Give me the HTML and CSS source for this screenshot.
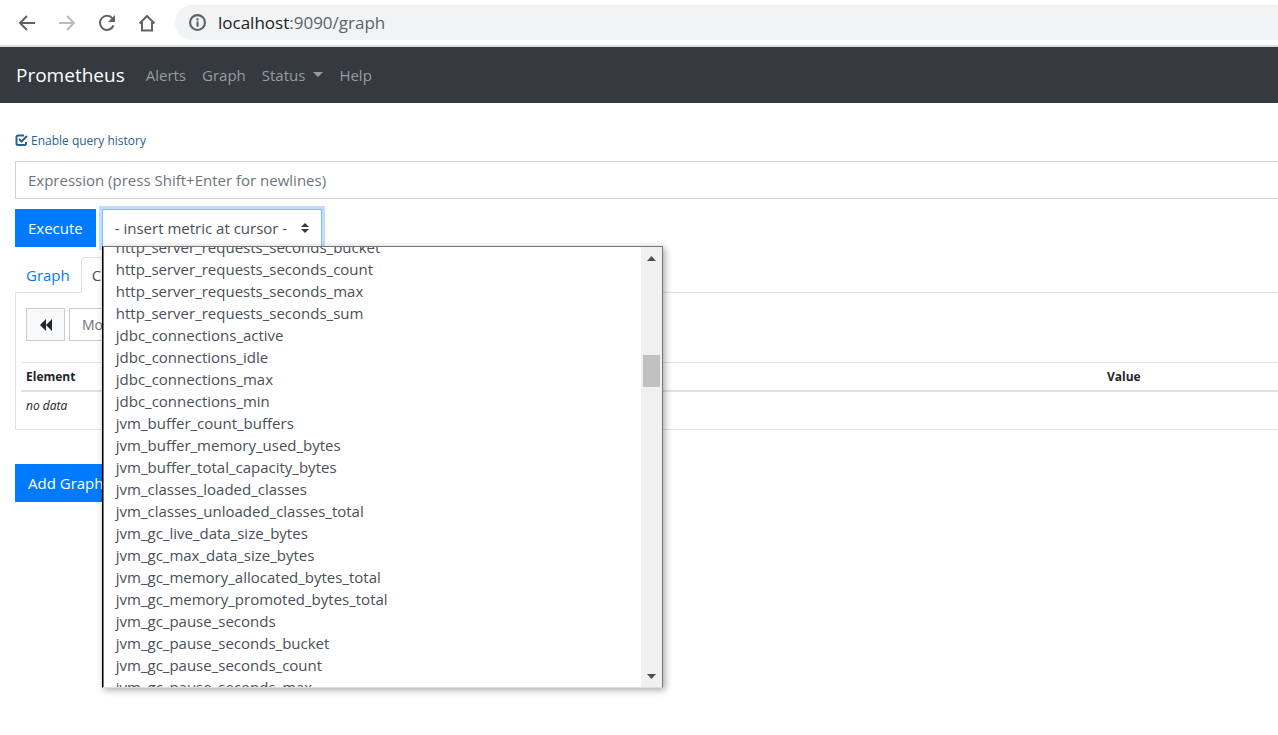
FILE: index.html
```
<!DOCTYPE html>
<html lang="en">
<head>
<meta charset="utf-8">
<title>Prometheus Time Series Collection and Processing Server</title>
<link rel="stylesheet" href="styles.css">
</head>
<body>
<header class="toolbar">
  <button class="tool" aria-label="Back"><svg viewBox="0 0 18 18"><path d="M17 9H2M9 2 2 9l7 7"/></svg></button>
  <button class="tool tool-off" aria-label="Forward" disabled><svg viewBox="0 0 18 18"><path d="M1 9h15M9 2l7 7-7 7"/></svg></button>
  <button class="tool" aria-label="Reload"><svg viewBox="0 0 18 18"><path d="M15.500 11.500A7 7 0 1 1 14.500 4.500"/><path class="solid" d="M17 1v7h-7z"/></svg></button>
  <button class="tool" aria-label="Home"><svg viewBox="0 0 18 18"><path d="M1.500 9.500 9 2l7.500 7.500M4 8v8.500h10V8"/></svg></button>
  <div class="address">
    <svg class="info" viewBox="0 0 16 16"><circle cx="8" cy="8" r="7"/><path d="M8 7v5M8 4v2"/></svg>
    <span class="url"><span class="host">localhost</span>:9090/graph</span>
  </div>
</header>
<nav class="navbar">
  <a class="brand" href="#">Prometheus</a>
  <a class="nav-link" href="#">Alerts</a>
  <a class="nav-link" href="#">Graph</a>
  <a class="nav-link caret" href="#">Status</a>
  <a class="nav-link" href="#">Help</a>
</nav>
<main class="page">
  <label class="history">
    <input class="history-input" type="checkbox" checked>
    <svg class="history-icon" viewBox="0 0 13 13"><path class="box" d="M9 1.500H3A1.500 1.500 0 0 0 1.500 3v6.500A1.500 1.500 0 0 0 3 11h6.500A1.500 1.500 0 0 0 11 9.500V8"/><path class="tick" d="M4 5l2.500 2.500L12 2"/></svg>
    <span>Enable query history</span>
  </label>
  <input class="expression" type="text" aria-label="Expression" placeholder="Expression (press Shift+Enter for newlines)">
  <div class="actions">
    <button class="primary">Execute</button>
    <div class="metric">
      <select class="metric-select" aria-label="Metric"><option>- insert metric at cursor -</option></select>
      <svg class="metric-arrows" viewBox="0 0 8 10"><path d="M0 4l4-4 4 4zM0 6h8l-4 4z"/></svg>
      <div class="popup">
        <ul class="options">
          <li>http_server_requests_seconds_bucket</li>
          <li>http_server_requests_seconds_count</li>
          <li>http_server_requests_seconds_max</li>
          <li>http_server_requests_seconds_sum</li>
          <li>jdbc_connections_active</li>
          <li>jdbc_connections_idle</li>
          <li>jdbc_connections_max</li>
          <li>jdbc_connections_min</li>
          <li>jvm_buffer_count_buffers</li>
          <li>jvm_buffer_memory_used_bytes</li>
          <li>jvm_buffer_total_capacity_bytes</li>
          <li>jvm_classes_loaded_classes</li>
          <li>jvm_classes_unloaded_classes_total</li>
          <li>jvm_gc_live_data_size_bytes</li>
          <li>jvm_gc_max_data_size_bytes</li>
          <li>jvm_gc_memory_allocated_bytes_total</li>
          <li>jvm_gc_memory_promoted_bytes_total</li>
          <li>jvm_gc_pause_seconds</li>
          <li>jvm_gc_pause_seconds_bucket</li>
          <li>jvm_gc_pause_seconds_count</li>
          <li>jvm_gc_pause_seconds_max</li>
        </ul>
        <div class="scrollbar">
          <svg class="scroll-arrow" viewBox="0 0 9 5"><path d="M0 5l4.500-5L9 5z"/></svg>
          <div class="thumb"></div>
          <svg class="scroll-arrow" viewBox="0 0 9 5"><path d="M0 0l4.500 5L9 0z"/></svg>
        </div>
      </div>
    </div>
  </div>
  <div class="tabs">
    <a class="tab" href="#">Graph</a>
    <a class="tab tab-active" href="#">Console</a>
  </div>
  <section class="panel">
    <div class="moment">
      <button class="rewind" aria-label="Earlier"><svg viewBox="0 0 12 12"><path d="M6 0v12L0 6zM12 0v12L6 6z"/></svg></button>
      <input class="moment-input" type="text" aria-label="Moment" placeholder="Moment">
    </div>
    <table class="results">
      <thead><tr><th class="element">Element</th><th>Value</th></tr></thead>
      <tbody><tr><td colspan="2"><i>no data</i></td></tr></tbody>
    </table>
  </section>
  <button class="primary">Add Graph</button>
</main>
</body>
</html>
```
FILE: styles.css
```
* { box-sizing: border-box; }
body {
  margin: 0;
  min-height: 100vh;
  background: #fff;
  color: #212529;
  font: 15px/24px "Open Sans", "Noto Sans", sans-serif;
}
button, input, select { font: inherit; border-radius: 0; margin: 0; }
a { text-decoration: none; }

.toolbar {
  display: flex;
  align-items: center;
  height: 47px;
  padding-left: 18px;
  border-bottom: 2px solid #dadce0;
}
.tool {
  width: 18px;
  height: 18px;
  margin-right: 22px;
  padding: 0;
  border: 0;
  background: none;
  color: #5f6368;
}
.tool-off { color: #babcbe; }
.tool svg { display: block; width: 18px; height: 18px; fill: none; stroke: currentColor; stroke-width: 2; }
.tool .solid { fill: currentColor; stroke: none; }
.address {
  display: flex;
  flex: 1;
  align-items: center;
  gap: 12px;
  height: 35px;
  margin-left: -3px;
  padding-left: 14px;
  border-radius: 18px 0 0 18px;
  background: #f1f3f4;
}
.info { width: 17px; height: 17px; fill: none; stroke: #5f6368; stroke-width: 2; }
.url { color: #5f6368; font-size: 17px; }
.host { color: #202124; }

.navbar {
  display: flex;
  align-items: center;
  gap: 16px;
  height: 56px;
  padding: 0 16px;
  background: #343a40;
}
.brand { margin-right: 5px; color: #fff; font-size: 19px; }
.nav-link { color: #999c9f; }
.caret::after {
  content: "";
  display: inline-block;
  margin-left: 8px;
  border: 5px solid transparent;
  border-top-color: currentColor;
  border-bottom: 0;
  vertical-align: 4px;
}

.page {
  min-height: calc(100vh - 103px);
  padding: 27px 0 0 15px;
}
.history {
  display: flex;
  align-items: center;
  gap: 3px;
  height: 21px;
  color: #286090;
  font-size: 12px;
}
.history-input { position: absolute; opacity: 0; }
.history-icon { width: 13px; height: 13px; fill: none; stroke: currentColor; stroke-width: 2; }
.expression {
  display: block;
  width: 100%;
  height: 38px;
  margin-top: 10px;
  padding: 0 12px;
  border: 1px solid #ced4da;
  border-right: 0;
}
::placeholder { color: #6c757d; opacity: 1; }
.actions { display: flex; gap: 6px; margin-top: 10px; }
.primary {
  height: 38px;
  padding: 0 13px;
  border: 0;
  background: #007bff;
  color: #fff;
}
.metric { position: relative; width: 220px; }
.metric-select {
  display: block;
  width: 100%;
  height: 38px;
  padding: 0 12px;
  appearance: none;
  border: 1px solid #80bdff;
  outline: none;
  background: #fff;
  box-shadow: 0 0 0 3px #bfdeff;
  color: #495057;
}
.metric-arrows { position: absolute; top: 14px; right: 13px; width: 8px; height: 10px; fill: #343a40; }
.popup {
  position: absolute;
  z-index: 1;
  top: 37px;
  left: 0;
  display: flex;
  width: 561px;
  height: 442px;
  border: 1px solid #767676;
  border-left-color: #000;
  border-bottom-color: #ddd;
  background: #fff;
  box-shadow: inset 1px 0 #767676, 2px 2px 7px rgba(0, 0, 0, .35);
}
.options {
  flex: 1;
  margin: 0;
  padding: 0 0 0 13px;
  overflow: hidden;
  list-style: none;
  color: #495057;
  line-height: 22px;
}
.options li:first-child { margin-top: -11px; }
.scrollbar {
  display: flex;
  flex-direction: column;
  align-items: center;
  width: 21px;
  padding: 9px 0 8px;
  background: #f0f0f0;
}
.scroll-arrow { width: 9px; height: 5px; fill: #505050; }
.thumb { width: 17px; height: 32px; margin: 94px 0 auto; background: #c1c1c1; }

.tabs { display: flex; margin-top: 10px; }
.tab {
  height: 36px;
  padding: 5px 10px;
  border: 1px solid transparent;
  color: #007bff;
}
.tab-active {
  border-color: #dee2e6;
  border-bottom-color: #fff;
  border-radius: 4px 4px 0 0;
  background: #fff;
  color: #495057;
  position: relative;
}
.panel {
  margin: -1px 0 34px;
  padding: 15px 0 9px 5px;
  border: 1px solid #dee2e6;
  border-right: 0;
}
.moment { display: flex; gap: 4px; padding-left: 5px; }
.rewind {
  display: grid;
  place-items: center;
  width: 39px;
  height: 33px;
  border: 1px solid #ccc;
  background: #f8f9fa;
}
.rewind svg { width: 12px; height: 12px; fill: #212529; }
.moment-input { width: 150px; height: 33px; padding: 0 12px; border: 1px solid #ccc; font-size: 14px; }
.results {
  width: 100%;
  margin-top: 21px;
  border-collapse: collapse;
  font-size: 12px;
  line-height: 18px;
}
.results th { padding: 5px 5px 4px; border-top: 1px solid #dee2e6; border-bottom: 2px solid #dee2e6; text-align: left; }
.results td { padding: 5px; }
.results .element { width: 86%; }
```
